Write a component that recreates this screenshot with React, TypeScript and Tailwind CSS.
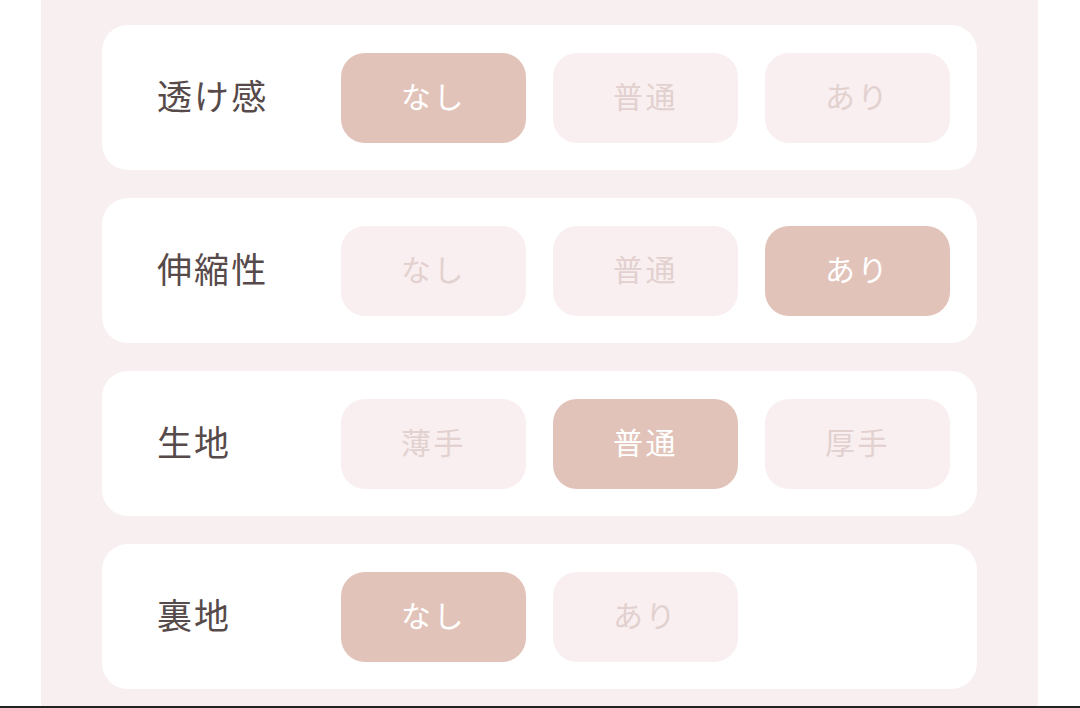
const rows: { label: string; options: string[]; selected: number }[] = [
  { label: "透け感", options: ["なし", "普通", "あり"], selected: 0 },
  { label: "伸縮性", options: ["なし", "普通", "あり"], selected: 2 },
  { label: "生地", options: ["薄手", "普通", "厚手"], selected: 1 },
  { label: "裏地", options: ["なし", "あり"], selected: 0 },
];

const OptionRow = ({ label, options, selected }: { label: string; options: string[]; selected: number }) => (
  <div className="h-[145px] shrink-0 rounded-[26px] bg-white flex items-center pl-[55px] pr-[28px]">
    <span className="w-[184px] shrink-0 mb-[6px] text-[35px] tracking-[0.06em] text-[#574a4a] leading-none">{label}</span>
    <div className="flex gap-[27px]">
      {options.map((opt, i) => (
        <button
          key={opt}
          className={
            i === selected
              ? "w-[185px] h-[90px] pb-[5px] rounded-[24px] bg-[#e2c3b9] text-white text-[30px] tracking-[0.08em] leading-none"
              : "w-[185px] h-[90px] pb-[5px] rounded-[24px] bg-[#f9eff0] text-[#e2d1cf] text-[30px] tracking-[0.08em] leading-none"
          }
        >
          {opt}
        </button>
      ))}
    </div>
  </div>
);

export default function App() {
  return (
    <div
      className="w-[1080px] h-[708px] bg-white flex flex-col overflow-hidden"
      style={{ fontFamily: '"Noto Sans CJK JP", "Noto Sans", sans-serif' }}
    >
      <div className="flex-1 flex">
        <div className="ml-[41px] w-[997px] bg-[#f8eff0] px-[61px] pt-[25px] flex flex-col gap-[28px] overflow-hidden">
          {rows.map((r) => (
            <OptionRow key={r.label} {...r} />
          ))}
        </div>
      </div>
      <div className="h-[2px] bg-[#222222]" />
    </div>
  );
}
